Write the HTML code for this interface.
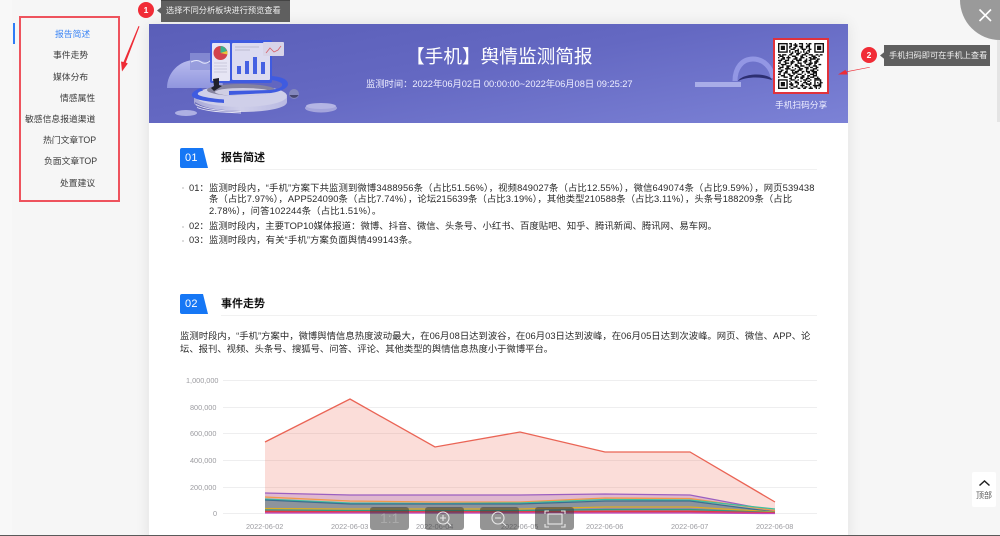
<!DOCTYPE html>
<html lang="zh">
<head>
<meta charset="utf-8">
<title>手机舆情监测简报</title>
<style>
*{margin:0;padding:0;box-sizing:border-box}
html,body{width:1000px;height:536px;overflow:hidden;background:#f6f6f6}
body{position:relative;font-family:"Liberation Sans","Noto Sans CJK SC",sans-serif;color:#333}
.t{position:absolute;white-space:nowrap;line-height:1}
.nav{font-size:8.8px;color:#3a3a3a}
.card{position:absolute;left:149px;top:24px;width:699px;height:520px;background:#fff;box-shadow:0 0 14px rgba(0,0,0,.09)}
.head{position:absolute;left:149px;top:24px;width:699px;height:99px;background:linear-gradient(170deg,#5a5eb8 0%,#6468c2 45%,#7c82d6 100%)}
.b{font-size:9.33px;color:#2a2a2a}
.sec{font-size:11px;font-weight:bold;color:#111}
.tip{position:absolute;background:#5f5f5f;color:#eee;font-size:8.2px;line-height:1;white-space:nowrap}
.num{position:absolute;width:16px;height:16px;border-radius:50%;background:#f12c36;color:#fff;font-size:8.5px;font-weight:bold;line-height:16px;text-align:center}
.tool{position:absolute;top:507px;width:39px;height:23px;border-radius:3px;background:rgba(60,60,60,.55)}
.ax{font-size:7.3px;color:#9b9ba0}
.hl{position:absolute;height:1px;background:#f1f1f1}
</style>
</head>
<body>
<div style="position:absolute;left:0;top:0;width:12px;height:536px;background:#f8f8f8"></div>
<div style="position:absolute;left:13px;top:23px;width:2px;height:21px;background:#2f7cf6"></div>
<div style="position:absolute;left:19px;top:16px;width:101px;height:186px;border:2px solid #ee535d"></div>

<div class="t nav" style="left:55px;top:30px;color:#3d86f5">报告简述</div>
<div class="t nav" style="left:53px;top:51px">事件走势</div>
<div class="t nav" style="left:53px;top:73px">媒体分布</div>
<div class="t nav" style="left:60px;top:94px">情感属性</div>
<div class="t nav" style="left:25px;top:115px">敏感信息报道渠道</div>
<div class="t nav" style="left:43px;top:136px">热门文章TOP</div>
<div class="t nav" style="left:44px;top:157px">负面文章TOP</div>
<div class="t nav" style="left:60px;top:179px">处置建议</div>

<div class="card"></div>
<div class="head"></div>

<svg style="position:absolute;left:149px;top:24px" width="699" height="99" viewBox="149 24 699 99">
  <defs>
    <linearGradient id="hill" x1="0" y1="0" x2="0" y2="1"><stop offset="0" stop-color="#b9bbee"/><stop offset="1" stop-color="#9096de"/></linearGradient>
    <linearGradient id="base" x1="0" y1="0" x2="1" y2="0"><stop offset="0" stop-color="#a9a9d8"/><stop offset=".5" stop-color="#cfcfe9"/><stop offset="1" stop-color="#b9b9e2"/></linearGradient>
  </defs>
  <path d="M167 88a28 28 0 0 1 56 0z" fill="url(#hill)"/>
  <rect x="190" y="53" width="30" height="17" fill="#8f95d8" opacity=".75"/>
  <path d="M191 62q6-3 10 0t9-1 6-6" fill="none" stroke="#e5e8fb" stroke-width="1"/>
  <path d="M194 97v5c0 7 21 10 47 10s46-4 46-10v-5z" fill="url(#base)"/>
  <ellipse cx="241" cy="96" rx="46" ry="11" fill="#cfcfe9"/>
  <path d="M195 102c8 5 16 7 30 8l16 1v2c-22 0-46-3-46-11z" fill="#6a6bb6"/>
  <path d="M196 104.500c10 5 24 6.500 45 7M197 107.500c10 4 24 4.500 44 5.500" stroke="#e5e5f5" stroke-width=".9" fill="none"/>
  <ellipse cx="241" cy="90" rx="34" ry="6" fill="#85839f"/>
  <ellipse cx="243" cy="92" rx="28" ry="4" fill="#cfcee3"/>
  <rect x="210" y="40" width="62" height="43" rx="2" fill="#3f5be0"/>
  <rect x="212" y="43" width="18" height="38" rx="1" fill="#e6e5f4"/>
  <rect x="232" y="43" width="38" height="37" rx="1" fill="#dcdbf0"/>
  <circle cx="220.500" cy="53" r="7" fill="#d2434d"/>
  <path d="M220.500 46a7 7 0 0 1 6.500 5l-6.500 2z" fill="#39b28a"/>
  <path d="M227 51a7 7 0 0 1 .5 3.500l-7-1.500z" fill="#e8c637"/>
  <path d="M214 63h13M214 66h13M214 69h13M214 72h13" stroke="#c0c0d2" stroke-width=".8"/>
  <path d="M235 47h24M235 50h15" stroke="#b0b1c6" stroke-width=".8"/>
  <rect x="237" y="66" width="4" height="8" fill="#4560e2"/>
  <rect x="245" y="61" width="4" height="13" fill="#4560e2"/>
  <rect x="253" y="57" width="4" height="17" fill="#4560e2"/>
  <rect x="261" y="62" width="4" height="12" fill="#4560e2"/>
  <rect x="263" y="42" width="21" height="14" rx="1" fill="#d8d4e8"/>
  <path d="M266 53l4-5 4 4 4-2 3-4" fill="none" stroke="#d8606a" stroke-width=".8"/>
  <path d="M213 79l6-1v7l3 1-8 5-3-3 3-2z" fill="#20202c"/>
  <path d="M201 88c-6 2-10 5-9 8 2 4 18 6 32 7v-3.500c-13-1-24-3-26-5-1-2 2-3 5-4z" fill="#3f5be0"/>
  <path d="M272 76c11 1 16 4 16 8 0 5-10 8-17 9l-42 2v-4l41-1c9-1 13-3 12-6-1-2-5-3-10-4z" fill="#3f5be0"/>
  <circle cx="294" cy="94" r="5" fill="#8488bd"/>
  <path d="M289.500 95a5 5 0 0 0 9 0z" fill="#454670"/>
  <ellipse cx="321" cy="108" rx="16" ry="4.500" fill="#a4a5dc"/>
  <ellipse cx="321" cy="106" rx="15" ry="3" fill="#b4b5e4"/>
  <ellipse cx="186" cy="113" rx="11" ry="3" fill="#aeb0e3"/>
  <rect x="695" y="82" width="46" height="5" fill="#a9ade8"/>
  <path d="M735 81c0-13 7-22 18-22s19 9 20 19" fill="none" stroke="#9397e4" stroke-width="5"/>
  <path d="M738 81c4-7 24-9 33-3l1 2c-12-4-26-3-34 1z" fill="#2d2f72"/>
</svg>

<div class="t" style="left:406px;top:48px;font-size:18.67px;color:#fff">【手机】舆情监测简报</div>
<div class="t" style="left:366px;top:80px;font-size:9.33px;color:#eef;letter-spacing:-.05px">监测时间：2022年06月02日 00:00:00~2022年06月08日 09:25:27</div>

<div style="position:absolute;left:773px;top:38px;width:56px;height:56px;background:#fff;border:2px solid #e0323c"></div>
<svg style="position:absolute;left:778px;top:43px" width="46" height="46" viewBox="0 0 33 33">
  <g fill="#111">
    <path d="M0 0h7v7H0zM1 1v5h5V1zM2 2h3v3H2zM26 0h7v7h-7zM27 1v5h5V1zM28 2h3v3h-3zM0 26h7v7H0zM1 27v5h5v-5zM2 28h3v3H2z" fill-rule="evenodd"/>
    <path d="M26 26h5v5h-5zM27 27v3h3v-3zM28 28h1v1h-1z" fill-rule="evenodd"/>
  </g>
  <path stroke="#111" fill="none" d="M8 .5h2m2 0h1m2 0h3m2 0h1m1 0h2M9 1.500h1m1 0h3m3 0h1m3 0h2M8 2.500h2m2 0h2m1 0h3m2 0h3M8 3.500h1m2 0h2m3 0h2m2 0h1m1 0h1M9 4.500h3m2 0h1m2 0h3m2 0h2M8 5.500h1m3 0h3m3 0h1m2 0h2M8 6.500h1m1 0h1m1 0h1m1 0h1m1 0h1m1 0h1m1 0h1m1 0h1M9 7.500h2m2 0h3m3 0h3M0 8.500h2m1 0h3m2 0h2m3 0h2m2 0h3m2 0h3m2 0h2m1 0h2M1 9.500h3m3 0h1m2 0h3m3 0h2m2 0h1m3 0h3m2 0h1M0 10.500h1m2 0h2m1 0h3m3 0h2m2 0h3m3 0h2m1 0h3M2 11.500h3m2 0h1m3 0h3m1 0h2m3 0h1m2 0h4m1 0h2M0 12.500h3m2 0h3m2 0h1m2 0h4m2 0h2m1 0h2m3 0h2M1 13.500h1m2 0h2m3 0h3m2 0h1m3 0h3m2 0h1m2 0h3M0 14.500h2m3 0h3m1 0h2m3 0h3m2 0h1m2 0h3m1 0h2M2 15.500h4m3 0h1m2 0h2m2 0h1m3 0h4m2 0h1m2 0h2M0 16.500h1m2 0h1m2 0h3m3 0h3m1 0h3m3 0h1m2 0h3M1 17.500h3m2 0h2m2 0h1m3 0h2m3 0h3m1 0h2m2 0h2M0 18.500h2m3 0h4m3 0h1m2 0h3m2 0h2m3 0h3M2 19.500h2m2 0h1m2 0h3m2 0h3m3 0h1m2 0h3m2 0h1M0 20.500h3m2 0h2m3 0h1m1 0h3m2 0h2m1 0h3m1 0h4M1 21.500h1m2 0h3m3 0h4m3 0h1m3 0h2m2 0h3M0 22.500h2m2 0h1m2 0h2m2 0h1m2 0h3m2 0h1m3 0h3m1 0h1M2 23.500h3m3 0h3m2 0h1m3 0h2m2 0h2m2 0h3M0 24.500h1m3 0h3m2 0h1m2 0h3m1 0h3m2 0h1m1 0h3m2 0h1M8 25.500h2m2 0h1m3 0h2m2 0h3m3 0h4M9 26.500h3m2 0h1m3 0h3m2 0h1M8 27.500h1m3 0h2m2 0h1m2 0h1m1 0h2m7 0h1M9 28.500h1m2 0h3m3 0h3m2 0h1m7 0h1M8 29.500h3m3 0h1m2 0h1m2 0h4m5 0h2M9 30.500h2m2 0h1m2 0h3m3 0h1m2 0h2m1 0h3M8 31.500h1m2 0h3m3 0h1m1 0h2m2 0h1m2 0h2m2 0h1M9 32.500h2m3 0h2m2 0h2m2 0h3m2 0h1m1 0h1"/>
</svg>
<div class="t" style="left:775px;top:100.500px;font-size:8.7px;color:#eef">手机扫码分享</div>

<svg style="position:absolute;left:180px;top:148px" width="29" height="21"><path d="M2 0h21l5 20H2a2 2 0 0 1-2-2V2a2 2 0 0 1 2-2z" fill="#1677f5"/></svg>
<div class="t" style="left:185px;top:152.500px;font-size:11px;color:#fff;letter-spacing:.3px">01</div>
<div class="t sec" style="left:221px;top:152.500px">报告简述</div>
<div class="hl" style="left:221px;top:169px;width:596px"></div>

<div style="position:absolute;left:181.500px;top:187px;width:2px;height:2px;background:#ddd"></div>
<div style="position:absolute;left:181.500px;top:226px;width:2px;height:2px;background:#ddd"></div>
<div style="position:absolute;left:181.500px;top:240px;width:2px;height:2px;background:#ddd"></div>
<div class="t b" style="left:189px;top:183.500px">01：</div>
<div class="t b" style="left:209px;top:183.500px;letter-spacing:.135px">监测时段内，“手机”方案下共监测到微博3488956条（占比51.56%），视频849027条（占比12.55%），微信649074条（占比9.59%），网页539438</div>
<div class="t b" style="left:209px;top:195px;letter-spacing:.1px">条（占比7.97%），APP524090条（占比7.74%），论坛215639条（占比3.19%），其他类型210588条（占比3.11%），头条号188209条（占比</div>
<div class="t b" style="left:209px;top:206.500px;letter-spacing:.17px">2.78%），问答102244条（占比1.51%）。</div>
<div class="t b" style="left:189px;top:222px">02：</div>
<div class="t b" style="left:209px;top:222px;letter-spacing:.05px">监测时段内，主要TOP10媒体报道：微博、抖音、微信、头条号、小红书、百度贴吧、知乎、腾讯新闻、腾讯网、易车网。</div>
<div class="t b" style="left:189px;top:236px">03：</div>
<div class="t b" style="left:209px;top:236px;letter-spacing:.13px">监测时段内，有关“手机”方案负面舆情499143条。</div>

<svg style="position:absolute;left:180px;top:294px" width="29" height="21"><path d="M2 0h21l5 20H2a2 2 0 0 1-2-2V2a2 2 0 0 1 2-2z" fill="#1677f5"/></svg>
<div class="t" style="left:185px;top:298.500px;font-size:11px;color:#fff;letter-spacing:.3px">02</div>
<div class="t sec" style="left:221px;top:298.500px">事件走势</div>
<div class="hl" style="left:221px;top:315px;width:596px"></div>

<div class="t b" style="left:180px;top:331.500px;letter-spacing:.03px">监测时段内，“手机”方案中，微博舆情信息热度波动最大，在06月08日达到波谷，在06月03日达到波峰，在06月05日达到次波峰。网页、微信、APP、论</div>
<div class="t b" style="left:180px;top:344.500px">坛、报刊、视频、头条号、搜狐号、问答、评论、其他类型的舆情信息热度小于微博平台。</div>

<svg style="position:absolute;left:0;top:0" width="1000" height="536" viewBox="0 0 1000 536">
  <g stroke="#eeeeef" stroke-width="1">
    <path d="M223 380.500h594M223 407.500h594M223 433.500h594M223 460.500h594M223 487.500h594M223 513.500h594"/>
  </g>
  <path d="M265 442L350 399 435 447 520 432 605 452 690 452 775 502V513.500H265z" fill="#ee6a5c" fill-opacity=".23"/>
  <path d="M265 442L350 399 435 447 520 432 605 452 690 452 775 502" fill="none" stroke="#ea6455" stroke-width="1.300"/>
  <path d="M265 493L350 495 435 495 520 495 605 494 690 495 775 511V513.500H265z" fill="#9b59b6" fill-opacity=".28"/>
  <path d="M265 497L350 501 435 502 520 502 605 498 690 498.500 775 510.500V513.500H265z" fill="#f39c4a" fill-opacity=".2"/>
  <path d="M265 499L350 503 435 503.500 520 503 605 499.500 690 500 775 509V513.500H265z" fill="#3fbf9f" fill-opacity=".22"/>
  <path d="M265 500L350 504 435 504 520 504 605 501 690 501 775 512V513.500H265z" fill="#3d5e7f" fill-opacity=".38"/>
  <path d="M265 508.500L350 509 435 509 520 509 605 507 690 507 775 512V513.500H265z" fill="#b07fa8" fill-opacity=".5"/>
  <g fill="none" stroke-width="1.300">
    <path d="M265 493L350 495 435 495 520 495 605 494 690 495 775 511" stroke="#9b5fc0"/>
    <path d="M265 497L350 501 435 502 520 502 605 498 690 498.500 775 510.500" stroke="#f2994a"/>
    <path d="M265 499L350 503 435 503.500 520 503 605 499.500 690 500 775 509" stroke="#3fbf9f"/>
    <path d="M265 500L350 504 435 504 520 504 605 501 690 501 775 512" stroke="#3b6f92"/>
    <path d="M265 508.500L350 509 435 509 520 509 605 507 690 507 775 512" stroke="#dcae24"/>
    <path d="M265 510L350 510.500 435 510.500 520 510.500 605 509.500 690 509.500 775 512.500" stroke="#2e9e80"/>
    <path d="M265 511.500L350 512 435 512 520 512 605 511.500 690 511.500 775 513" stroke="#e23a46" stroke-width="1.800"/>
    <path d="M265 513L350 513 435 513 520 513 605 513 690 513 775 513.500" stroke="#c04ac0"/>
  </g>
</svg>

<div class="t ax" style="left:186px;top:376.500px">1,000,000</div>
<div class="t ax" style="left:190px;top:403.500px">800,000</div>
<div class="t ax" style="left:190px;top:430px">600,000</div>
<div class="t ax" style="left:190px;top:456.500px">400,000</div>
<div class="t ax" style="left:190px;top:483.500px">200,000</div>
<div class="t ax" style="left:213px;top:510px">0</div>
<div class="t ax" style="left:246px;top:522.500px">2022-06-02</div>
<div class="t ax" style="left:331px;top:522.500px">2022-06-03</div>
<div class="t ax" style="left:416px;top:522.500px">2022-06-04</div>
<div class="t ax" style="left:501px;top:522.500px">2022-06-05</div>
<div class="t ax" style="left:586px;top:522.500px">2022-06-06</div>
<div class="t ax" style="left:671px;top:522.500px">2022-06-07</div>
<div class="t ax" style="left:756px;top:522.500px">2022-06-08</div>

<div class="tool" style="left:370px"></div>
<div class="tool" style="left:425px"></div>
<div class="tool" style="left:480px"></div>
<div class="tool" style="left:535px"></div>
<div class="t" style="left:380px;top:511px;font-size:14px;color:#aaa">1:1</div>
<div style="position:absolute;left:997px;top:40px;width:3px;height:82px;background:#e4e4e4"></div>
<div style="position:absolute;left:972px;top:472px;width:24px;height:35px;background:#fff;border-radius:2px"></div>
<svg style="position:absolute;left:0;top:0" width="1000" height="536" viewBox="0 0 1000 536">
  <g fill="none" stroke="#e8e8e8" stroke-width="1.100">
    <circle cx="443" cy="518" r="6"/><path d="M447.500 522.500l3.500 3.500M440 518h6M443 515v6"/>
    <circle cx="498" cy="518" r="6"/><path d="M502.500 522.500l3.500 3.500M495 518h6"/>
    <rect x="548" y="514" width="14" height="10"/><path d="M545 514v-3h4M561 511h4v3M565 524v3h-4M549 527h-4v-3"/>
  </g>
  <path d="M139.500 26.500L125.800 62.500 127.800 63.500 122 71.500 121 61.500 123.500 62 138.500 26z" fill="#ee2c36"/>
  <path d="M870 67.500L847 72 847.500 74.500 838 74.500 845.500 69.800 846 71.500 869.500 67z" fill="#ee2c36"/>
  <circle cx="1000" cy="0" r="40" fill="#9a9a9a"/>
  <path d="M979.500 9.500l11.500 11.500M991 9.500L979.500 21" stroke="#fff" stroke-width="1.600" fill="none"/>
  <path d="M157 10.500l5-4v8zM880 55.500l5-4v8z" fill="#5f5f5f"/>
  <path d="M979.500 485.500l5-4.500 5 4.500" fill="none" stroke="#222" stroke-width="1.500"/>
</svg>
<div class="num" style="left:138px;top:2px">1</div>
<div class="tip" style="left:161px;top:0;width:129px;height:22px;padding:6px 0 0 5px;border-top:1px solid #444">选择不同分析板块进行预览查看</div>
<div class="num" style="left:861px;top:47px">2</div>
<div class="tip" style="left:884px;top:45px;width:106px;height:21px;padding:6.500px 0 0 5px">手机扫码即可在手机上查看</div>

<div class="t" style="left:976px;top:492px;font-size:8px;color:#555">顶部</div>
<div style="position:absolute;left:0;top:535px;width:1000px;height:1px;background:#5a5a5a"></div>
</body>
</html>
